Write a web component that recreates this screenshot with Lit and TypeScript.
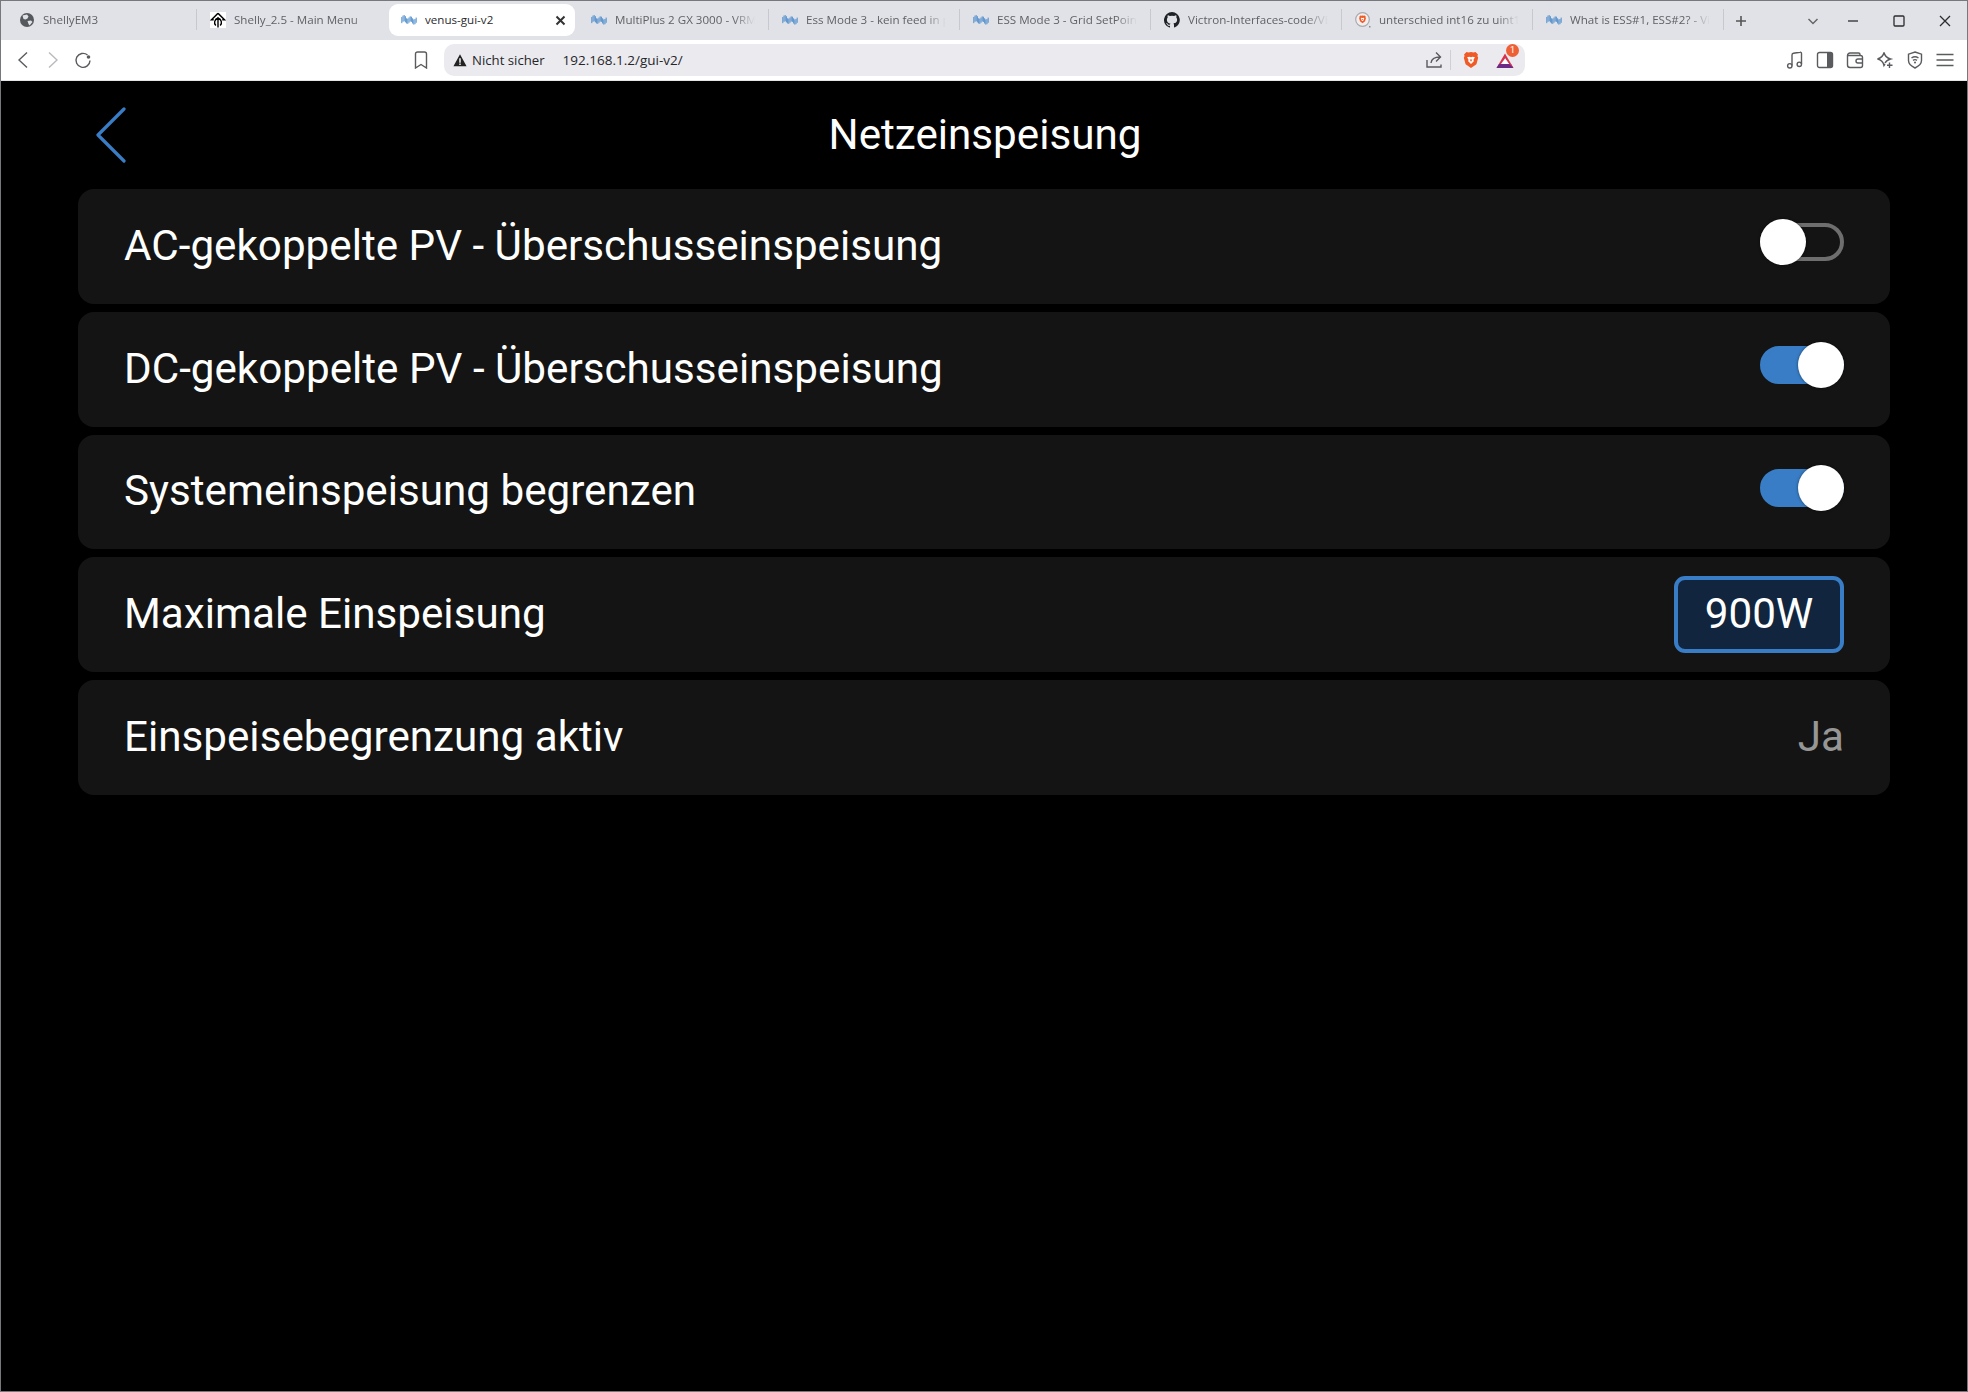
import { LitElement, html, css, svg } from "lit";
import { customElement } from "lit/decorators.js";

function buildWave(): string {
  let d = "";
  for (let x = 0.8; x < 16; x += 1.2) {
    const c = 7.2 + 1.4 * Math.sin((x - 2.2) * 0.95 + 3.9) + (x / 16) * 1.8;
    const half = x < 5 ? 3.1 : 2.6;
    d += `M${x.toFixed(2)} ${(c - half).toFixed(2)}V${(c + half).toFixed(2)}`;
  }
  return d;
}
const waveD = buildWave();
const victron = svg`<path d="${waveD}" fill="none" stroke="#4c8ccb" stroke-width="0.95"/>`;
const globe = svg`<circle cx="8" cy="8" r="7" fill="#55585c"/><path d="M3.500 3.500L8 2.500l1.500 2-1 2-2 1-2-.5zM8.500 9l3.500-.5 1.500 1.500-3 3.500-1-1.500z" fill="#e1e2e7"/>`;
const shelly = svg`<rect width="16" height="16" fill="#fff"/><path d="M8 1.200L1.500 7.800h2.200M8 1.200l6.500 6.600h-2.200" fill="none" stroke="#000" stroke-width="1.500"/><path d="M8 5v10.500M5.800 13.500C3.500 11 4.500 7.500 8 6c3.500 1.500 4.500 5 2.200 7.500" fill="none" stroke="#000" stroke-width="1.400"/>`;
const github = svg`<path fill="#1f2328" d="M8 0a8 8 0 0 0-2.500 15.600c.4.1.5-.2.5-.4v-1.400c-2.200.5-2.700-1-2.700-1-.4-.9-.9-1.200-.9-1.200-.7-.5.1-.5.1-.5.8.1 1.200.8 1.200.8.7 1.200 1.900.9 2.300.7.1-.5.3-.9.5-1.100-1.800-.2-3.600-.9-3.600-4 0-.9.3-1.600.8-2.100-.1-.2-.4-1 .1-2.100 0 0 .7-.2 2.200.8a7.500 7.500 0 0 1 4 0c1.500-1 2.200-.8 2.200-.8.4 1.100.2 1.900.1 2.100.5.600.8 1.300.8 2.100 0 3.100-1.900 3.700-3.700 3.900.3.300.6.800.6 1.500v2.200c0 .2.100.5.600.4A8 8 0 0 0 8 0z"/>`;
const lionShape = svg`<path d="M8 .8l2.200.5 1.800-.5 2.200 2.200-.5 1.500.7 1.500-1.600 5.800L8 15.200 3.200 11.800 1.600 6l.7-1.500-.5-1.500L4 .8l1.800.5z" fill="#ef5a26"/><path d="M4.500 5.500l2-.5 1.500.6 1.500-.6 2 .5-1.300 2.200.3 1.500L8 11.500 5.500 9.200l.3-1.500z" fill="#fff"/><path d="M6.800 7.500h2.400L8 9.500z" fill="#ef5a26"/>`;
const braveTab = svg`<circle cx="7.500" cy="7.500" r="6.800" fill="#f1eeee" stroke="#a9a9ad" stroke-width="1.200"/><g transform="translate(3.300 3.100) scale(.53)">${lionShape}</g><rect x="14" y="14" width="1.500" height="1.500" fill="#8a8b8e"/>`;

const TABS: { title: string; icon: unknown; active?: boolean }[] = [
  { title: "ShellyEM3", icon: globe },
  { title: "Shelly_2.5 - Main Menu", icon: shelly },
  { title: "venus-gui-v2", icon: victron, active: true },
  { title: "MultiPlus 2 GX 3000 - VRM", icon: victron },
  { title: "Ess Mode 3 - kein feed in p", icon: victron },
  { title: "ESS Mode 3 - Grid SetPoint", icon: victron },
  { title: "Victron-Interfaces-code/VE", icon: github },
  { title: "unterschied int16 zu uint16", icon: braveTab },
  { title: "What is ESS#1, ESS#2? - Vi", icon: victron },
];

const ROWS = [
  { label: "AC-gekoppelte PV - Überschusseinspeisung", kind: "off" },
  { label: "DC-gekoppelte PV - Überschusseinspeisung", kind: "on" },
  { label: "Systemeinspeisung begrenzen", kind: "on" },
  { label: "Maximale Einspeisung", kind: "input", value: "900W" },
  { label: "Einspeisebegrenzung aktiv", kind: "text", value: "Ja" },
];

@customElement("app-root")
export class AppRoot extends LitElement {
  static styles = css`
    :host {
      display: block;
      width: 1968px;
      height: 1392px;
      box-sizing: border-box;
      background: #000;
      border: 1px solid #77787b;
      overflow: hidden;
      font-family: Roboto, sans-serif;
    }
    .strip {
      height: 39px;
      background: #e1e2e7;
      display: flex;
      padding-left: 5px;
      position: relative;
    }
    .tab {
      width: 191px;
      height: 32px;
      margin-top: 3px;
      box-sizing: border-box;
      display: flex;
      align-items: center;
      padding-left: 13px;
      gap: 8px;
      font: 11.600px "Open Sans", sans-serif;
      color: #606165;
      flex: none;
      position: relative;
    }
    .tab.sep::after {
      content: "";
      position: absolute;
      right: 0;
      top: 5px;
      height: 21px;
      width: 1px;
      background: #c8c9ce;
    }
    .tab.active {
      background: #fff;
      border-radius: 9px;
      color: #2a2a2c;
      width: 186px;
      margin: 3px 3px 0 1px;
      padding-left: 12px;
    }
    .tab svg { flex: none; width: 16px; height: 16px; }
    .title {
      white-space: nowrap;
      overflow: hidden;
      width: 140px;
      padding-bottom: 2px;
      -webkit-mask-image: linear-gradient(to right, #000 calc(100% - 22px), transparent);
      mask-image: linear-gradient(to right, #000 calc(100% - 22px), transparent);
    }
    .active .title { -webkit-mask-image: none; mask-image: none; flex: 1; width: auto; }
    .close { margin-right: 9px; fill: none; stroke: #333; stroke-width: 2; }
    .tab svg.close { width: 11px; height: 11px; }
    .controls {
      position: absolute;
      left: 1732px;
      top: 0;
      height: 39px;
      display: flex;
      align-items: center;
    }
    .controls svg { fill: none; stroke: #2c2c2e; stroke-width: 1.300; width: 16px; height: 16px; flex: none; }
    .controls .plus { stroke: #555; stroke-width: 1.600; margin-right: 56px; }
    .controls .chev { stroke: #666; stroke-width: 1.500; margin-right: 24px; }
    .controls .gap { margin-right: 30px; }
    .toolbar {
      height: 41px;
      background: #fff;
      display: flex;
      align-items: center;
      border-bottom: 1px solid #e4e5e8;
      box-sizing: border-box;
    }
    .toolbar svg { fill: none; stroke: #5a5b5e; stroke-width: 1.400; flex: none; width: 18px; height: 18px; }
    .nav { display: flex; gap: 12px; padding-left: 13px; width: 411px; box-sizing: border-box; }
    .nav .dim { stroke: #b9babd; }
    .nav .dot { fill: #5a5b5e; stroke: none; }
    .bm { margin-right: 8px; }
    .url {
      width: 1081px;
      height: 32px;
      background: #ebebef;
      border-radius: 10px;
      display: flex;
      align-items: center;
      font: 13.200px "Open Sans", sans-serif;
      color: #26262a;
      padding-left: 9px;
      box-sizing: border-box;
      margin-left: 6px;
    }
    .url .warn { width: 14px; height: 14px; fill: #222; stroke: none; margin-right: 5px; }
    .url .addr { margin-left: 18px; flex: 1; font-size: 13.500px; }
    .url .sep { width: 1px; height: 20px; background: #cfd0d4; margin: 0 11px 0 7px; }
    .url .lion { margin-right: 16px; stroke: none; }
    .bat { position: relative; width: 18px; height: 18px; margin-right: 11px; }
    .bat path { stroke: none; }
    .bat .p1 { fill: #6b2a86; }
    .bat .p2 { fill: #d6314f; }
    .bat .p3 { fill: #fff; }
    .badge {
      position: absolute;
      left: 10px;
      top: -7px;
      width: 13px;
      height: 13px;
      border-radius: 50%;
      background: #ee5f34;
      color: #fff;
      font: 9px/13px Roboto, sans-serif;
      text-align: center;
    }
    .tools { display: flex; gap: 12px; margin-left: 261px; }
    .tools .fill { fill: #5a5b5e; stroke: none; }
    .head {
      height: 108px;
      display: flex;
      align-items: center;
      justify-content: center;
      position: relative;
      color: #fff;
      font-size: 42.200px;
      padding: 0 0 2px 2px;
      box-sizing: border-box;
    }
    .back {
      position: absolute;
      left: 95px;
      top: 26px;
      width: 32px;
      height: 56px;
      fill: none;
      stroke: #387dc5;
      stroke-width: 3.200;
      stroke-linecap: round;
      stroke-linejoin: round;
    }
    .list {
      display: flex;
      flex-direction: column;
      gap: 8px;
      padding: 0 77px;
    }
    .row {
      height: 114.750px;
      background: #141414;
      border-radius: 16px;
      display: flex;
      align-items: center;
      justify-content: space-between;
      padding: 0 46px 0 46px;
      color: #fff;
      font-size: 42.200px;
    }
    .label, .value { white-space: nowrap; padding-bottom: 2px; }
    .toggle {
      width: 84px;
      height: 38px;
      border-radius: 19px;
      box-sizing: border-box;
      border: 4px solid #6e6e6e;
      position: relative;
      margin-top: -8px;
    }
    .toggle.on { background: #387dc5; border-color: #387dc5; }
    .knob {
      position: absolute;
      width: 46px;
      height: 46px;
      border-radius: 50%;
      background: #fff;
      top: -8px;
      left: -4px;
      box-shadow: 0 0 3px rgba(0, 0, 0, 0.5);
    }
    .on .knob { left: 34px; }
    .input {
      width: 170px;
      height: 77px;
      box-sizing: border-box;
      border: 4px solid #387dc5;
      border-radius: 11px;
      background: #11263e;
      display: flex;
      align-items: center;
      justify-content: center;
      padding-bottom: 2px;
    }
    .value { color: #969696; }
  `;

  render() {
    return html`
      <div class="strip">
        ${TABS.map((t, i) => {
          const next = TABS[i + 1];
          const sep = !t.active && !(next && next.active);
          return html`<div class="tab ${t.active ? "active" : ""} ${sep ? "sep" : ""}">
            <svg viewBox="0 0 16 16">${t.icon}</svg>
            <span class="title">${t.title}</span>
            ${t.active
              ? html`<svg class="close" viewBox="0 0 11 11"><path d="M1.500 1.500l8 8M9.500 1.500l-8 8"/></svg>`
              : null}
          </div>`;
        })}
        <div class="controls">
          <svg class="plus" viewBox="0 0 16 16"><path d="M8 3v10M3 8h10"/></svg>
          <svg class="chev" viewBox="0 0 16 16"><path d="M3.500 6L8 10.500 12.500 6"/></svg>
          <svg class="gap" viewBox="0 0 16 16"><path d="M3 8h10"/></svg>
          <svg class="gap" viewBox="0 0 16 16"><rect x="3" y="3" width="10" height="10" rx="1"/></svg>
          <svg viewBox="0 0 16 16"><path d="M3 3l10 10M13 3L3 13"/></svg>
        </div>
      </div>
      <div class="toolbar">
        <div class="nav">
          <svg viewBox="0 0 18 18"><path d="M13 1.500L5 9l8 7.500"/></svg>
          <svg class="dim" viewBox="0 0 18 18"><path d="M5 1.500L13 9l-8 7.500"/></svg>
          <svg viewBox="0 0 18 18">
            <path d="M16 9.500A7 7 0 1 1 13.500 4"/>
            <circle class="dot" cx="14.500" cy="6" r="1.800"/>
          </svg>
        </div>
        <svg class="bm" viewBox="0 0 18 18"><path d="M3.500 3a2 2 0 0 1 2-2h7a2 2 0 0 1 2 2v14L9 13.500 3.500 17z"/></svg>
        <div class="url">
          <svg class="warn" viewBox="0 0 16 16"><path d="M8 1.500l7.500 13.500H.5zM7.100 6v5h1.800V6zm0 6v1.700h1.800V12z" fill-rule="evenodd"/></svg>
          <span>Nicht sicher</span>
          <span class="addr">192.168.1.2/gui-v2/</span>
          <svg viewBox="0 0 18 18"><path d="M2 9v7h14v-2.500M6 12c.5-4.500 3.500-6 9-6M11 1.500L15.500 6 11 10.500"/></svg>
          <span class="sep"></span>
          <svg class="lion" viewBox="0 0 16 16">${lionShape}</svg>
          <div class="bat">
            <svg viewBox="0 0 18 18">
              <path class="p2" d="M9 2.500L.5 17H5l4-6z"/>
              <path class="p1" d="M.5 17h17L15 13H3z"/>
              <path class="p2" d="M9 2.500l8.500 14.500L13 13 9 7z"/>
              <path class="p3" d="M9 7.500l4 5.500H5z"/>
            </svg>
            <span class="badge">1</span>
          </div>
        </div>
        <div class="tools">
          <svg viewBox="0 0 18 18"><path d="M6 14.500V4c0-1 .5-1.500 1.500-1.700L14 1.200c1-.2 1.500.3 1.500 1.300V13"/><circle cx="3.800" cy="14.800" r="2.200"/><circle cx="13.300" cy="13.300" r="2.200"/></svg>
          <svg viewBox="0 0 18 18"><rect x="1.500" y="1.500" width="15" height="15" rx="2"/><path class="fill" d="M11 1.500h3.500a2 2 0 0 1 2 2v11a2 2 0 0 1-2 2H11z"/></svg>
          <svg viewBox="0 0 18 18"><path d="M14 4.500V3.300C14 2.300 13.500 2 12.500 2H4a2.500 2.500 0 0 0-2.500 2.500V14A2.500 2.500 0 0 0 4 16.500h10.500a2 2 0 0 0 2-2V6.500a2 2 0 0 0-2-2H2"/><path d="M16.500 8H12a2 2 0 0 0 0 4h4.500"/></svg>
          <svg viewBox="0 0 18 18"><path d="M8 1.500c.8 3.800 2.500 5.500 6.500 6.500-3 .8-4.500 2-5.500 4M8 1.500C7.200 5.300 5.500 7 1.500 8c4 1 5.700 2.700 6.500 6.500l1-1.500"/><path d="M13.500 11.500v5.500M11 14.200h5.500"/></svg>
          <svg viewBox="0 0 18 18"><path d="M9 1l6.500 2.200v6.300c0 3.300-3 5.800-6.500 7.500-3.500-1.700-6.500-4.200-6.500-7.500V3.200z"/><path d="M5.500 7c2.200-1.600 4.800-1.600 7 0M7 9.300c1.300-.9 2.700-.9 4 0"/><circle class="fill" cx="9" cy="11.500" r="1"/></svg>
          <svg viewBox="0 0 18 18"><path d="M.5 3.500h17M.5 9h17M.5 14.500h17"/></svg>
        </div>
      </div>
      <div class="head">
        <svg class="back" viewBox="0 0 32 56"><path d="M28 2L2 28l26 26"/></svg>
        Netzeinspeisung
      </div>
      <div class="list">
        ${ROWS.map(
          (r) => html`<div class="row">
            <span class="label">${r.label}</span>
            ${r.kind === "off" || r.kind === "on"
              ? html`<div class="toggle ${r.kind}"><div class="knob"></div></div>`
              : r.kind === "input"
                ? html`<div class="input">${r.value}</div>`
                : html`<span class="value">${r.value}</span>`}
          </div>`,
        )}
      </div>
    `;
  }
}
